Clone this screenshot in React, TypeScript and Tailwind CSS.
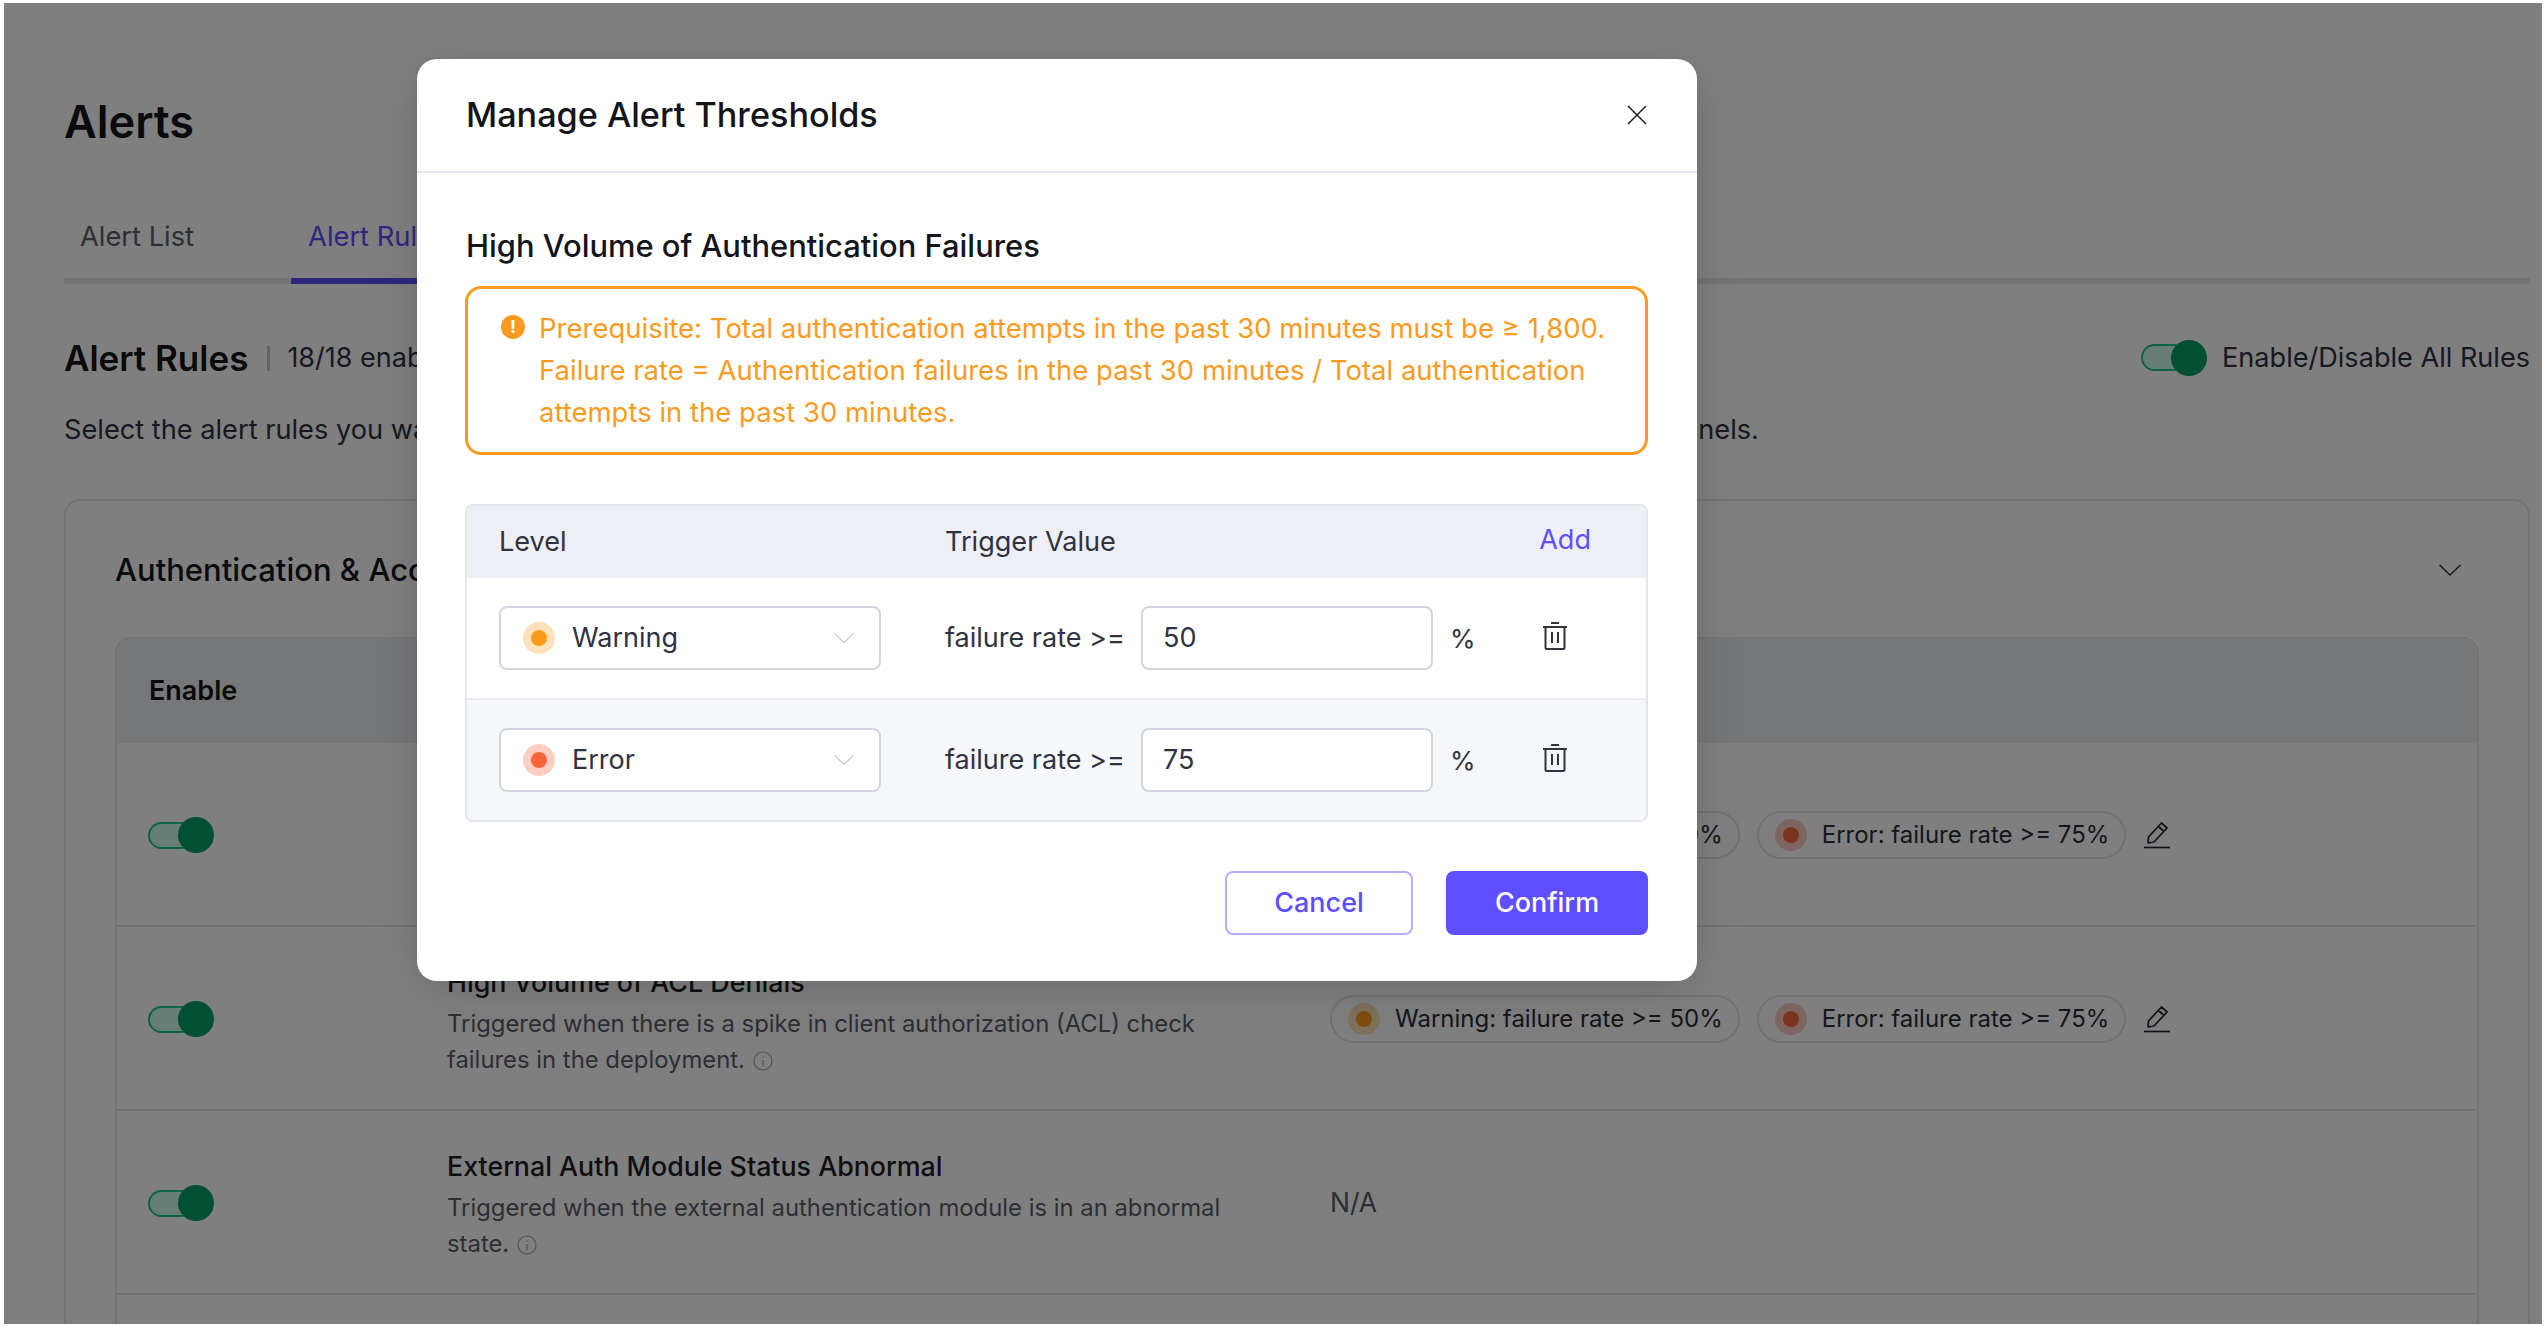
import React from "react";

function Dot({ kind }: { kind: "warn" | "err" }) {
  return (
    <span className={kind === "warn" ? "flex h-[32px] w-[32px] shrink-0 items-center justify-center rounded-full bg-[#fee0ba]" : "flex h-[32px] w-[32px] shrink-0 items-center justify-center rounded-full bg-[#fdcdc1]"}>
      <span className={kind === "warn" ? "h-[16px] w-[16px] rounded-full bg-[#fb9a19]" : "h-[16px] w-[16px] rounded-full bg-[#f56638]"} />
    </span>
  );
}

function Chevron({ cls }: { cls: string }) {
  return (
    <svg viewBox="0 0 20 10" className={cls} fill="none" stroke="currentColor" strokeWidth="1.4">
      <path d="M0.5 0.5 L10 9.5 L19.5 0.5" />
    </svg>
  );
}

function Toggle() {
  return (
    <div className="flex h-[36px] w-[66px] items-center">
      <span className="h-[27px] w-[46px] rounded-full border-2 border-[#14c684] bg-[#cdfdeb]" />
      <span className="-ml-[16px] h-[36px] w-[36px] shrink-0 rounded-full bg-[#04a066]" />
    </div>
  );
}

function Info() {
  return (
    <svg viewBox="0 0 20 20" className="ml-[8px] inline-block h-[20px] w-[20px] align-[-3px] text-[#9ca3af]" fill="none" stroke="currentColor" strokeWidth="1.2">
      <circle cx="10" cy="10" r="9" />
      <path d="M10 9 V15 M10 5.4 V7" />
    </svg>
  );
}

function Pencil() {
  return (
    <svg viewBox="0 0 28 28" className="h-[28px] w-[28px] shrink-0 text-[#1f2430]" fill="none" stroke="currentColor" strokeWidth="1.7">
      <path d="M18.5 2 L24 7 L11 21 L5 22 L5.5 16 Z M15.5 5.5 L21 10.5" strokeLinejoin="round" />
      <path d="M1 26.5 H27" />
    </svg>
  );
}

function Trash() {
  return (
    <svg viewBox="0 0 24 28" className="mb-[4px] h-[28px] w-[24px] text-[#303240]" fill="none" stroke="currentColor" strokeWidth="2">
      <path d="M8 1 H16 M0 5 H24" />
      <path d="M2.5 5 V26 Q2.5 27 3.5 27 H20.5 Q21.5 27 21.5 26 V5" />
      <path d="M9 10 V21 M15 10 V21" />
    </svg>
  );
}

function Pill({ kind, text }: { kind: "warn" | "err"; text: string }) {
  return (
    <div className="flex h-[48px] items-center gap-[15px] rounded-full border-2 border-[#e2e3e6] pl-[16px] pr-[15px] text-[24px] text-[#2b2d38]">
      <Dot kind={kind} />
      <span className="whitespace-nowrap">{text}</span>
    </div>
  );
}

function Row({ name, desc, info, pills }: { name: string; desc: React.ReactNode; info?: boolean; pills: boolean }) {
  return (
    <div className="grid h-[184px] grid-cols-[330px_883px_1fr] items-center border-b-2 border-[#e6e7ea] pt-[2px]">
      <div className="pl-[31px]">
        <Toggle />
      </div>
      <div className="w-[790px]">
        <div className="text-[26.8px] font-medium leading-[42px] text-[#1c1e26]">{name}</div>
        <div className="mt-[3px] text-[23.85px] leading-[36px] text-[#5b5e6b]">
          {desc}
          {info && <Info />}
        </div>
      </div>
      {pills ? (
        <div className="flex items-center">
          <Pill kind="warn" text="Warning: failure rate >= 50%" />
          <div className="ml-[17px]">
            <Pill kind="err" text="Error: failure rate >= 75%" />
          </div>
          <div className="ml-[17px]">
            <Pencil />
          </div>
        </div>
      ) : (
        <div className="text-[26.5px] text-[#5b5e6b]">N/A</div>
      )}
    </div>
  );
}

function ThresholdRow({ kind, label, value, shaded }: { kind: "warn" | "err"; label: string; value: string; shaded?: boolean }) {
  return (
    <div className={shaded ? "flex h-[120px] items-center bg-[#f5f7fb] pl-[32px]" : "flex h-[122px] items-center border-b-2 border-[#e9ebf1] bg-white pl-[32px]"}>
      <div className="flex h-[64px] w-[382px] items-center rounded-[8px] border-2 border-[#d1d5e0] bg-white pl-[22px] pr-[25px]">
        <Dot kind={kind} />
        <span className="ml-[17px] flex-1 text-[27px] text-[#303240]">{label}</span>
        <Chevron cls="h-[10px] w-[20px] text-[#c8ccd7]" />
      </div>
      <span className="ml-[64px] w-[196px] whitespace-nowrap text-[27px] text-[#303240]">failure rate &gt;=</span>
      <div className="flex h-[64px] w-[292px] items-center rounded-[8px] border-2 border-[#d1d5e0] bg-white pl-[20px] text-[27px] text-[#303240]">{value}</div>
      <span className="ml-[17px] w-[93px] text-[26px] text-[#303240]">%</span>
      <Trash />
    </div>
  );
}

export default function App() {
  return (
    <div className="h-[1326px] w-[2546px] overflow-hidden bg-white pl-[4px] pt-[3px] font-['Inter',sans-serif]">
      <div className="relative h-[1321px] w-[2538px] overflow-hidden bg-white">
        <div className="pl-[60px] pr-[12px] pt-[89px]">
          <h1 className="text-[45px] font-semibold leading-[60px] text-[#14151a]">Alerts</h1>

          <div className="mt-[64px] flex gap-[81px] border-b-[6px] border-[#e6e7ea]">
            <div className="-mb-[6px] border-b-[6px] border-transparent px-[16px] pb-[20px] text-[27.3px] leading-[42px] text-[#5b5e6b]">Alert List</div>
            <div className="-mb-[6px] border-b-[6px] border-[#5e4eff] px-[17px] pb-[20px] text-[27.3px] leading-[42px] text-[#5e4eff]">Alert Rules</div>
          </div>

          <div className="mt-[52px] flex h-[44px] items-center">
            <h2 className="text-[35px] font-semibold leading-[44px] text-[#14151a]">Alert Rules</h2>
            <span className="ml-[19px] h-[25px] w-[3px] bg-[#c3c6d0]" />
            <span className="ml-[17px] text-[27px] text-[#303240]">18/18 enabled</span>
            <div className="ml-auto flex items-center gap-[15px]">
              <Toggle />
              <span className="text-[27.1px] text-[#303240]">Enable/Disable All Rules</span>
            </div>
          </div>

          <p className="mt-[29px] whitespace-nowrap text-[27.2px] leading-[42px] text-[#303240]">
            Select the alert rules you want to enable. When any rule is triggered, alerts will be sent through the configured notification channels.
          </p>

          <div className="mt-[48px] rounded-t-[16px] border-2 border-[#e6e7ea] px-[49px] pt-[47px]">
            <div className="flex h-[44px] items-center justify-between">
              <h3 className="text-[31px] font-medium leading-[44px] text-[#14151a]">Authentication &amp; Access</h3>
              <Chevron cls="mr-[18px] h-[12px] w-[22px] text-[#303240]" />
            </div>
            <div className="mt-[45px] rounded-t-[16px] border-2 border-[#e6e7ea]">
              <div className="grid h-[104px] grid-cols-[330px_883px_1fr] items-center rounded-t-[14px] bg-[#edeff3]">
                <div className="pl-[32px] text-[27px] font-semibold text-[#14151a]">Enable</div>
                <div className="text-[27px] font-semibold text-[#14151a]">Rule Name</div>
                <div className="text-[27px] font-semibold text-[#14151a]">Threshold</div>
              </div>
              <Row name="High Volume of Authentication Failures" desc="Triggered when there is a spike in client authentication failures in the deployment." info pills />
              <Row name="High Volume of ACL Denials" desc="Triggered when there is a spike in client authorization (ACL) check failures in the deployment." info pills />
              <Row name="External Auth Module Status Abnormal" desc="Triggered when the external authentication module is in an abnormal state." info pills={false} />
              <div className="h-[60px]" />
            </div>
          </div>
        </div>

        <div className="absolute inset-0 bg-black/50" />

        <div className="absolute left-[413px] top-[56px] h-[922px] w-[1280px] rounded-[20px] bg-white shadow-[0_8px_48px_rgba(0,0,0,0.15)]">
          <div className="flex h-[114px] items-center justify-between border-b-2 border-[#e3e8ee] pl-[49px] pr-[50px]">
            <h2 className="text-[34.2px] font-medium text-[#14151a]">Manage Alert Thresholds</h2>
            <svg viewBox="0 0 20 20" className="h-[20px] w-[20px] text-[#1c1e26]" fill="none" stroke="currentColor" strokeWidth="1.5">
              <path d="M1 1 L19 19 M19 1 L1 19" />
            </svg>
          </div>
          <div className="px-[48px]">
            <h3 className="mt-[51px] pl-[1px] text-[30.9px] font-medium leading-[44px] text-[#14151a]">High Volume of Authentication Failures</h3>
            <div className="mt-[18px] flex h-[169px] w-[1183px] rounded-[16px] border-[3px] border-[#fa9b1f] pl-[33px] pr-[20px] pt-[18px]">
              <span className="mt-[8px] flex h-[24px] w-[24px] shrink-0 items-center justify-center rounded-full bg-[#fa9b1f] text-[18px] font-bold leading-none text-white">!</span>
              <p className="ml-[14px] text-[27.5px] leading-[42px] text-[#fa9b1f]">
                Prerequisite: Total authentication attempts in the past 30 minutes must be ≥ 1,800.
                <br />
                Failure rate = Authentication failures in the past 30 minutes / Total authentication attempts in the past 30 minutes.
              </p>
            </div>

            <div className="mt-[49px] w-[1183px] overflow-hidden rounded-[8px] border-2 border-[#e3e6ea]">
              <div className="flex h-[72px] items-center bg-[#edeff4] pl-[32px] text-[27.1px] text-[#303240]">
                <span className="w-[446px]">Level</span>
                <span className="flex-1">Trigger Value</span>
                <span className="mb-[4px] mr-[55px] text-[#5e4eff]">Add</span>
              </div>
              <ThresholdRow kind="warn" label="Warning" value="50" />
              <ThresholdRow kind="err" label="Error" value="75" shaded />
            </div>

            <div className="mt-[49px] flex w-[1183px] justify-end gap-[33px]">
              <button className="h-[64px] w-[188px] rounded-[8px] border-2 border-[#b5aeff] bg-white text-[27px] font-medium text-[#5e4eff]">Cancel</button>
              <button className="h-[64px] w-[202px] rounded-[8px] bg-[#5e4eff] text-[27px] font-medium text-white">Confirm</button>
            </div>
          </div>
        </div>
      </div>
    </div>
  );
}
